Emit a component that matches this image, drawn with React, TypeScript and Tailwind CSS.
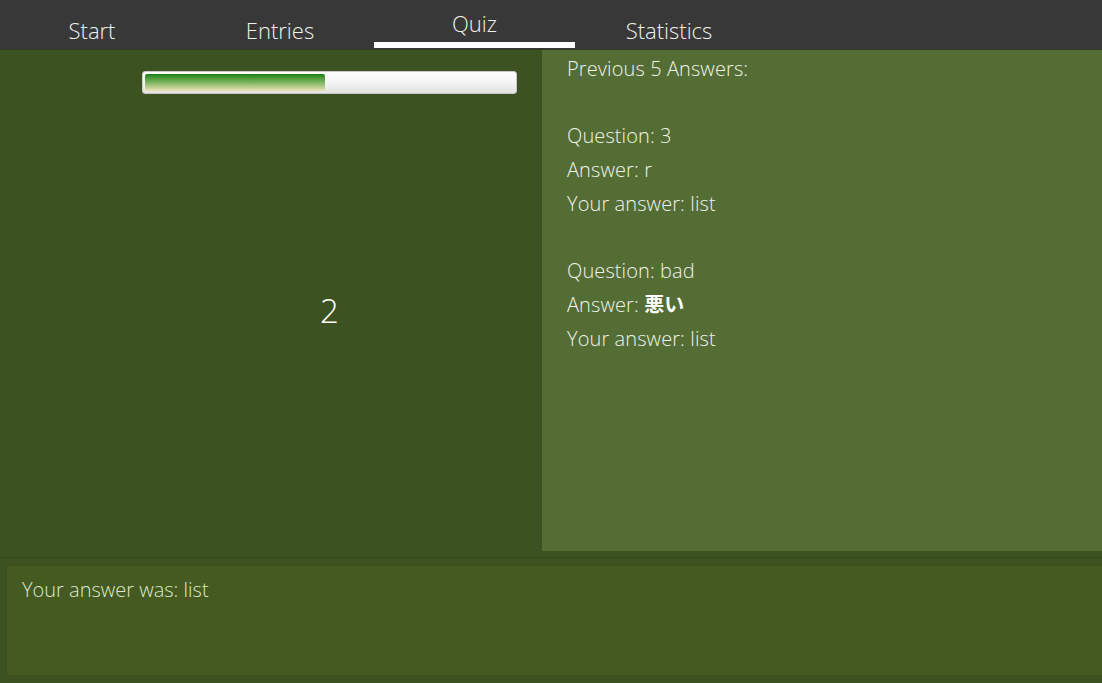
import React from "react";

const tabs = [
  { label: "Start", active: false },
  { label: "Entries", active: false },
  { label: "Quiz", active: true },
  { label: "Statistics", active: false },
];

const history = [
  { question: "3", answer: "r", yours: "list" },
  { question: "bad", answer: "悪い", yours: "list" },
];

const font = { fontFamily: '"Open Sans", "Noto Sans CJK JP", sans-serif' };

export default function App() {
  return (
    <div
      className="w-[1102px] h-[683px] flex flex-col bg-[#3d5221] text-[#f0f3ea] font-light overflow-hidden"
      style={font}
    >
      {/* Tab bar */}
      <div className="h-[50px] bg-[#383838] border-b border-[#2f3a22] flex">
        <div className="flex -ml-[2px]">
          {tabs.map((tab) => (
            <div
              key={tab.label}
              className={
                tab.active
                  ? "w-[201px] flex flex-col items-center justify-end"
                  : "w-[188px] flex items-end justify-center"
              }
            >
              {tab.active ? (
                <>
                  <span className="text-[22px] leading-none mb-[8px]">{tab.label}</span>
                  <span className="w-full h-[6px] bg-white mb-[1px]"></span>
                </>
              ) : (
                <span className="text-[22px] leading-none mb-[8px]">{tab.label}</span>
              )}
            </div>
          ))}
        </div>
      </div>

      {/* Main area */}
      <div className="h-[501px] flex">
        <div className="w-[542px] flex flex-col items-center pl-[117px]">
          {/* Progress bar */}
          <div className="mt-[21px] w-[375px] h-[23px] rounded-[3px] border border-[#c8c8c8] bg-gradient-to-b from-[#ffffff] via-[#f4f4f4] to-[#e2e2e2] p-[2px]">
            <div className="w-[180px] h-full rounded-[2px] bg-gradient-to-b from-[#0d820d] via-[#7bb560] to-[#eee3b8]"></div>
          </div>
          <div className="mt-[200px] text-[33px] text-white leading-none">2</div>
        </div>

        <div className="flex-1 bg-[#546d35] pl-[25px] pt-[2px] text-[20px] tracking-[0.1px] leading-[33.7px]">
          <div>Previous 5 Answers:</div>
          {history.map((h, i) => (
            <div key={i} className="mt-[33.7px]">
              <div>Question: {h.question}</div>
              <div>
                Answer:{" "}
                <span className={h.answer === "悪い" ? "font-bold text-white" : ""}>{h.answer}</span>
              </div>
              <div>Your answer: {h.yours}</div>
            </div>
          ))}
        </div>
      </div>

      {/* Bottom result box */}
      <div className="h-[6px]"></div>
      <div className="border-t border-[#34471b] pt-[7px] pl-[6px] flex-1">
        <div className="h-[111px] bg-[#445a21] border border-[#3a4d1c] border-r-0 px-[15px] pt-[9px] text-[20px] text-[#dfe7cf]">
          Your answer was: list
        </div>
      </div>
    </div>
  );
}
